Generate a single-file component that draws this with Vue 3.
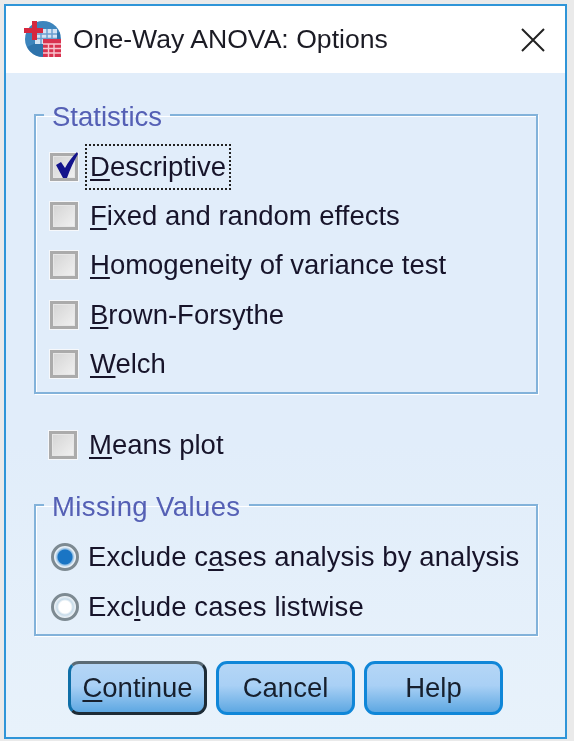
<template>
  <div class="screen">
    <div class="dialog">
      <header class="titlebar">
        <svg class="app-icon" width="38" height="38" viewBox="0 0 38 38">
          <circle cx="19" cy="19" r="18" fill="#3d85bd" />
          <path d="M3 27a18 18 0 0 0 22 9l11-12V12z" fill="#1f6199" opacity="0.5" />
          <rect x="11" y="9" width="22" height="15" fill="#d5e4f4" />
          <path d="M11 14h22M11 18.500h22M17 9v15M23 9v15M28 9v15" stroke="#6b9fd0" stroke-width="1.500" />
          <rect x="0" y="8" width="19" height="5" fill="#d6283f" />
          <rect x="8" y="1" width="5" height="19" fill="#d6283f" />
          <rect x="19" y="19" width="18" height="18" fill="#d9324f" />
          <path d="M19 24h18M19 28.500h18M19 33h18M24.500 24v13M30 24v13" stroke="#f7c6d0" stroke-width="1.400" />
        </svg>
        <span class="title">One-Way ANOVA: Options</span>
        <svg class="close" width="26" height="26" viewBox="0 0 26 26">
          <path d="M2 2l22 22M24 2L2 24" stroke="#222" stroke-width="2" fill="none" />
        </svg>
      </header>

      <div class="content">
        <fieldset class="group stats">
          <legend>Statistics</legend>
          <div v-for="opt in statistics" :key="opt.rest" class="row">
            <span class="check">
              <svg v-if="opt.checked" class="tick" width="24" height="28" viewBox="0 0 24 28">
                <path d="M1 14l5-3 4 6C13 11 17 6 22 1l1 2C19 10 15 18 12 27H8z" fill="#14148c" />
              </svg>
            </span>
            <span class="label" :class="{ focused: opt.checked }"><u>{{ opt.key }}</u>{{ opt.rest }}</span>
          </div>
        </fieldset>

        <div class="row means">
          <span class="check"></span>
          <span class="label"><u>M</u>eans plot</span>
        </div>

        <fieldset class="group missing">
          <legend>Missing Values</legend>
          <div class="row radio-row">
            <span class="radio on"></span>
            <span class="label wide">Exclude c<u>a</u>ses analysis by analysis</span>
          </div>
          <div class="row radio-row">
            <span class="radio"></span>
            <span class="label wide">Exc<u>l</u>ude cases listwise</span>
          </div>
        </fieldset>

        <div class="buttons">
          <button class="btn default"><u>C</u>ontinue</button>
          <button class="btn">Cancel</button>
          <button class="btn">Help</button>
        </div>
      </div>
    </div>
  </div>
</template>

<script setup>
const statistics = [
  { key: 'D', rest: 'escriptive', checked: true },
  { key: 'F', rest: 'ixed and random effects' },
  { key: 'H', rest: 'omogeneity of variance test' },
  { key: 'B', rest: 'rown-Forsythe' },
  { key: 'W', rest: 'elch' }
]
</script>

<style>
html,
body {
  margin: 0;
  background: #eaeaea;
}
</style>

<style scoped>
.screen {
  width: 574px;
  height: 741px;
  padding: 4px 7px 2px 4px;
  box-sizing: border-box;
  overflow: hidden;
  font-family: "Liberation Sans", Arial, sans-serif;
  filter: blur(0.6px);
}

.dialog {
  height: 100%;
  box-sizing: border-box;
  border: 2px solid #2f95d8;
  display: flex;
  flex-direction: column;
  background: linear-gradient(#e1edfa 60%, #e8f2fb);
}

.titlebar {
  height: 67px;
  flex: none;
  background: #fff;
  display: flex;
  align-items: center;
  padding: 0 19px 0 18px;
  box-sizing: border-box;
}

.app-icon {
  flex: none;
  margin-bottom: 1px;
}

.title {
  margin-left: 11px;
  font-size: 26.600px;
  color: #1b1b24;
  flex: 1;
}

.close {
  flex: none;
}

.content {
  flex: 1;
  padding: 25px 28px 0;
  display: flex;
  flex-direction: column;
}

.group {
  margin: 0;
  padding: 0;
  width: 504px;
  box-sizing: border-box;
  border: 2px solid #82b2da;
  box-shadow: 1px 1px 0 #fff, inset 1px 1px 0 #fff;
}

.group legend {
  padding: 4px 8px 0;
  font-size: 27.500px;
  line-height: 30px;
  color: #5560b5;
}

.stats {
  height: 296px;
  padding: 10px 0 0 14px;
}

.stats legend {
  margin-left: -6px;
}

.row {
  display: flex;
  align-items: center;
  height: 49.300px;
}

.check {
  position: relative;
  flex: none;
  width: 28px;
  height: 28px;
  box-sizing: border-box;
  border: 3px solid #ababab;
  outline: 1px solid #f6f8fb;
  background: linear-gradient(135deg, #d4d4d4, #f1f1f1);
  box-shadow: inset 0 0 0 1px #e6e6e6;
}

.tick {
  position: absolute;
  left: 2px;
  top: -5px;
}

.label {
  margin-left: 8px;
  font-size: 27.500px;
  line-height: 44px;
  padding: 0 4px;
  color: #17142a;
  white-space: nowrap;
}

.label u {
  text-underline-offset: 3px;
  text-decoration-thickness: 2px;
}

.focused {
  outline: 2px dotted #222;
  outline-offset: -1px;
}

.means {
  margin: 26px 0 0 15px;
}

.missing {
  margin-top: 19px;
  height: 148px;
  padding: 10px 0 0 15px;
}

.missing legend {
  margin-left: -7px;
  letter-spacing: 0.400px;
}

.radio-row {
  height: 50px;
}

.radio {
  flex: none;
  width: 28px;
  height: 28px;
  box-sizing: border-box;
  border-radius: 50%;
  border: 3px solid #7d8a92;
  background: radial-gradient(circle, #fff 0 6px, #c7dbe9 8px, #f2f6fa 11px);
}

.radio.on {
  background: radial-gradient(circle, #1a75c4 0 7px, #8fbde3 8px, #e8f0f7 10px);
}

.wide {
  margin-left: 5px;
  letter-spacing: 0.100px;
}

.buttons {
  display: flex;
  gap: 9px;
  margin: 25px 0 0 34px;
}

.btn {
  width: 139px;
  height: 54px;
  padding: 0;
  box-sizing: border-box;
  border: 3px solid #0f86d8;
  border-radius: 11px;
  background: linear-gradient(#b5d6f6, #a9d0f5 45%, #5ea8e2);
  font-family: inherit;
  font-size: 27.500px;
  color: #17202e;
}

.btn u {
  text-underline-offset: 3px;
  text-decoration-thickness: 2px;
}

.default {
  border-color: #5b6b75 #1d2b36 #1d2b36 #0f6fa8;
}
</style>
